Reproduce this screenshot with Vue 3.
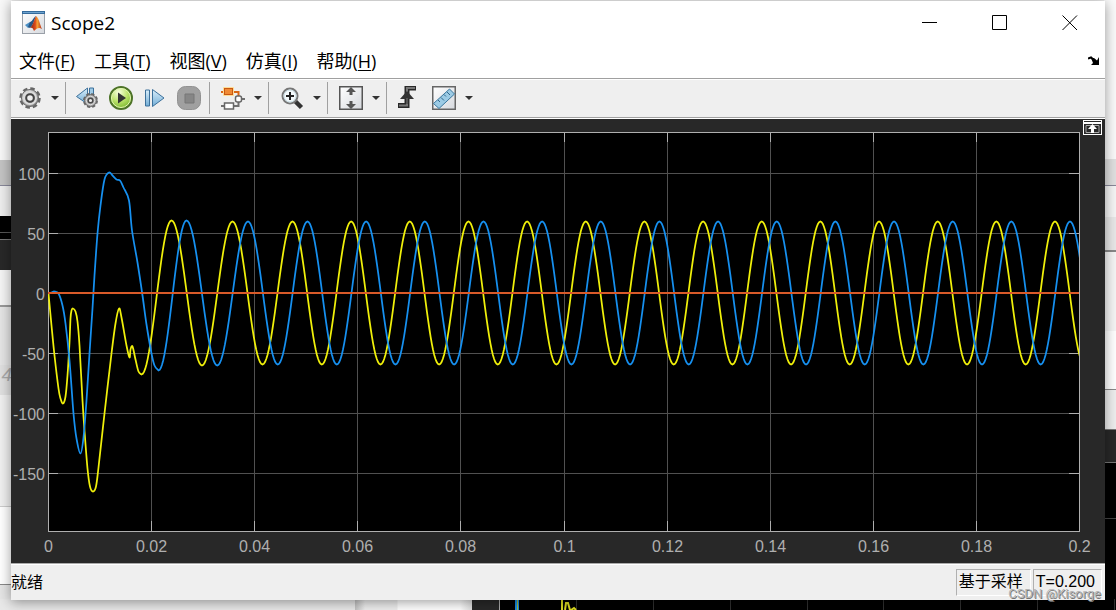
<script setup>
const menus = [
  { text: '文件', key: 'F' },
  { text: '工具', key: 'T' },
  { text: '视图', key: 'V' },
  { text: '仿真', key: 'I' },
  { text: '帮助', key: 'H' },
]

const left = 37
const right = 1068
const top = 13
const bottom = 412
const xTicks = ['0', '0.02', '0.04', '0.06', '0.08', '0.1', '0.12', '0.14', '0.16', '0.18', '0.2'].map((label, i) => ({
  label,
  x: Math.round(left + (i * (right - left)) / 10) + 0.5,
}))
const yTicks = [100, 50, 0, -50, -100, -150].map((v, i) => ({ label: String(v), y: [54, 114, 174, 234, 294, 354][i] + 0.5 }))
const xInner = xTicks.slice(1, -1)

// Start-up transients, in window coordinates of the trace
const yellowStart = [
  [48, 293], [51, 325], [54, 355], [58, 388], [60, 398], [62.5, 403], [65, 396], [67, 375], [69, 342], [70, 318], [71, 310],
  [72.5, 308], [75, 311], [77, 321], [79, 345], [82, 400], [84, 430], [87, 468], [89.5, 486], [92.5, 491], [95.5, 486], [98, 467],
  [104, 413], [111, 353], [115, 323], [118.5, 308], [121, 317], [126, 345], [129, 357], [130, 349], [132, 346], [135, 359],
  [138, 371], [141, 374],
]
const blueStart = [
  [48, 293], [51, 292], [54, 291], [58, 293], [62, 305], [65, 323], [69, 360], [73, 413], [76, 438], [80, 453], [83, 437],
  [86, 400], [89, 353], [92, 308], [94, 275], [97, 233], [100, 205], [104, 179], [108.5, 172], [112, 175], [116, 179],
  [119.5, 180], [123, 187], [128.5, 200], [131.5, 230], [137, 262], [142, 295], [146, 324], [151, 353], [154, 365], [158, 370],
]

function spline(pts) {
  let d = `M${pts[0][0]} ${pts[0][1]}`
  for (let i = 0; i < pts.length - 1; i++) {
    const p0 = pts[Math.max(i - 1, 0)]
    const p1 = pts[i]
    const p2 = pts[i + 1]
    const p3 = pts[Math.min(i + 2, pts.length - 1)]
    d += `C${p1[0] + (p2[0] - p0[0]) / 6} ${p1[1] + (p2[1] - p0[1]) / 6} ${p2[0] - (p3[0] - p1[0]) / 6} ${p2[1] - (p3[1] - p1[1]) / 6} ${p2[0]} ${p2[1]}`
  }
  return d
}

function trace(start, peaks, lastPeak) {
  const ext = [start[start.length - 1]]
  const period = 58.7
  const all = [...peaks]
  const n = Math.round((lastPeak - peaks[peaks.length - 1]) / period)
  const base = peaks[peaks.length - 1]
  for (let i = 1; i <= n + 1; i++) all.push(base + (i * (lastPeak - base)) / n)
  all.forEach((p, i) => {
    ext.push([p, i ? 221 : 220])
    if (i < all.length - 1) ext.push([(p + all[i + 1]) / 2, i ? 364 : 365])
  })
  let d = spline(start)
  for (let i = 0; i < ext.length - 1; i++) {
    const [x0, y0] = ext[i]
    const [x1, y1] = ext[i + 1]
    for (let k = 1; k <= 24; k++) {
      const t = k / 24
      d += `L${(x0 + (x1 - x0) * t).toFixed(2)} ${((y0 + y1) / 2 + ((y0 - y1) / 2) * Math.cos(Math.PI * t)).toFixed(2)}`
    }
  }
  return d
}

const yellow = trace(yellowStart, [171, 232, 292], 1054.5)
const blue = trace(blueStart, [186, 247.5, 307], 1069.5)
</script>

<template>
  <div class="desktop">
    <div class="behind edge-left" aria-hidden="true"><i class="l1"></i><i class="l2"></i><i class="l3"></i><i class="l4"></i><i class="l5"></i><i class="l6"></i><i class="l7"></i><b>4</b><i class="l8"></i><i class="l9"></i><i class="l10"></i></div>
    <div class="behind edge-right" aria-hidden="true"><i class="r1"></i><i class="r2"></i><i class="r3"></i><i class="r4"></i><i class="r5"></i><i class="r6"></i><i class="r7"></i></div>
    <div class="behind edge-bottom" aria-hidden="true">
      <div class="b1"></div><div class="b2"></div><div class="b3"></div>
      <svg class="b4" viewBox="0 0 617 11" preserveAspectRatio="xMinYMin slice">
        <g stroke="#303030"><path d="M76.5 0V11M153.5 0V11M230.5 0V11M307.5 0V11M383.5 0V11M460.5 0V11M537.5 0V11M614.5 0V11" /></g>
        <path d="M17 0V11" stroke="#1689e0" stroke-width="4" /><path d="M17.500 0V11" stroke="#a5b83a" />
        <path d="M62 0V11M65 11L66 4L68 4L70 11M71 11L74 9L76 11" fill="none" stroke="#dddd20" stroke-width="2" />
      </svg>
    </div>

    <main class="window">
      <header class="titlebar">
        <svg class="logo" viewBox="0 0 24 24">
          <defs>
            <linearGradient id="lg" x1="0" x2="1" y1="0" y2="1"><stop offset="0" stop-color="#fff" /><stop offset="1" stop-color="#d6d9de" /></linearGradient>
            <linearGradient id="flame" x1="0" x2="1"><stop offset="0" stop-color="#7c2016" /><stop offset=".45" stop-color="#df4d1c" /><stop offset=".6" stop-color="#f6a435" /><stop offset="1" stop-color="#b62a16" /></linearGradient>
          </defs>
          <rect x=".5" y=".5" width="22" height="22" fill="url(#lg)" stroke="#9aa0a8" />
          <path d="M0 0H23V3H0Z" fill="#356b9c" /><path d="M1 1H22V2H1Z" fill="#6ea3cf" />
          <path d="M3 14L8 11L10 15L6 17Z" fill="#4b8fc4" /><path d="M8 11C10 11 11 7 14 5L11 13L8 17L6 16Z" fill="#285684" />
          <path d="M14 5C17 7 18 14 20 18C17 16 15 17 12 20C11 17 10 16 8 17C11 14 12 9 14 5Z" fill="url(#flame)" />
        </svg>
        <h1>Scope2</h1>
        <div class="controls">
          <button aria-label="最小化"><svg viewBox="0 0 16 16"><path d="M0 7.5H15" /></svg></button>
          <button aria-label="最大化"><svg viewBox="0 0 16 16"><path d="M.5 .5H14.5V14.5H.5Z" /></svg></button>
          <button aria-label="关闭"><svg viewBox="0 0 16 16"><path d="M.5 .5L15 15M15 .5L.5 15" /></svg></button>
        </div>
      </header>

      <nav class="menubar">
        <button v-for="m in menus" :key="m.key">{{ m.text }}(<u>{{ m.key }}</u>)</button>
        <button class="dock" aria-label="停靠"><svg viewBox="0 0 12 10"><path d="M0 2.500L3 1.500L7 5" fill="none" stroke="#000" stroke-width="2" /><path d="M11 1V9H3L5 7L3 2H6L9 4.500Z" /></svg></button>
      </nav>

      <div class="toolbar" role="toolbar">
        <div class="group first">
          <div class="split">
            <button aria-label="配置属性">
              <svg viewBox="0 0 24 24">
                <defs><linearGradient id="metal" x1="0" y1="0" x2="1" y2="1"><stop offset="0" stop-color="#eee" /><stop offset="1" stop-color="#777" /></linearGradient></defs>
                <circle cx="12" cy="12" r="9.5" fill="none" stroke="#666" stroke-width="2.500" stroke-dasharray="4.500 2.960" />
                <circle cx="12" cy="12" r="8.500" fill="url(#metal)" stroke="#666" /><circle cx="12" cy="12" r="6" fill="none" stroke="#dcdcdc" stroke-width="2" />
                <circle cx="12" cy="12" r="3.800" fill="#efefef" stroke="#444" stroke-width="2" />
              </svg>
            </button>
            <button class="drop" aria-label="更多配置"></button>
          </div>
        </div>
        <div class="group run">
          <button aria-label="单步回退">
            <svg viewBox="0 0 24 24">
              <defs><linearGradient id="sky" x1="0" y1="0" x2="0" y2="1"><stop offset="0" stop-color="#d9eefa" /><stop offset="1" stop-color="#72add6" /></linearGradient></defs>
              <path d="M1.500 10.500L12.500 2V18Z" fill="url(#sky)" stroke="#3d719b" /><path d="M14.500 2H18.500V12H14.500Z" fill="#9fcbe7" stroke="#3d719b" />
              <circle cx="15.500" cy="14.500" r="6.500" fill="none" stroke="#666" stroke-width="2" stroke-dasharray="3.200 1.900" />
              <circle cx="15.500" cy="14.500" r="6" fill="#a9a9a9" stroke="#686868" /><circle cx="15.500" cy="14.500" r="4.200" fill="none" stroke="#ddd" /><circle cx="15.500" cy="14.500" r="2.300" fill="#eee" stroke="#4a4a4a" stroke-width="1.500" />
            </svg>
          </button>
          <button aria-label="运行">
            <svg viewBox="0 0 24 24">
              <defs><radialGradient id="go" cx=".4" cy=".25" r=".8"><stop offset="0" stop-color="#f8ffdf" /><stop offset=".5" stop-color="#bce36c" /><stop offset="1" stop-color="#6faf22" /></radialGradient></defs>
              <circle cx="12" cy="12" r="11" fill="url(#go)" stroke="#4d7328" stroke-width="2" /><circle cx="12" cy="12" r="9.500" fill="none" stroke="#e2f6b1" stroke-width="1" />
              <path d="M9 6.500V17.500L17 12Z" fill="#333" />
            </svg>
          </button>
          <button aria-label="步进"><svg viewBox="0 0 24 24"><path d="M2.500 4H6.500V20H2.500Z" fill="url(#sky)" stroke="#3d719b" /><path d="M9.500 3.500V20.500L21 12Z" fill="url(#sky)" stroke="#3d719b" /></svg></button>
          <button aria-label="停止"><svg viewBox="0 0 24 24"><rect x=".5" y=".5" width="23" height="23" rx="8" fill="#a0a0a0" stroke="#929292" /><path d="M8 8H17V17H8Z" fill="#868686" stroke="#777" /></svg></button>
        </div>
        <div class="group">
          <div class="split">
            <button aria-label="突出显示模块">
              <svg viewBox="0 0 24 24">
                <path d="M0 20H3M13 20H17.500V16M21 13H24" fill="none" stroke="#707070" stroke-width="2" /><path d="M0 6H3M13 6H17.500V10" fill="none" stroke="#d96716" stroke-width="2" />
                <rect x="2" y="1" width="11" height="9" rx="1" fill="#ffdb94" /><rect x="3.500" y="2.500" width="8" height="6" fill="#f08a35" stroke="#c85813" />
                <rect x="3.500" y="17" width="9" height="6" fill="#fff" stroke="#666" stroke-width="1.500" /><rect x="14.500" y="10" width="6" height="6" rx="2" fill="#fff" stroke="#666" stroke-width="1.500" />
              </svg>
            </button>
            <button class="drop" aria-label="更多模块"></button>
          </div>
        </div>
        <div class="group">
          <div class="split">
            <button aria-label="放大">
              <svg viewBox="0 0 24 24"><path d="M15 15L21.500 21.500" stroke="#333" stroke-width="4.500" /><circle cx="10" cy="10" r="7.500" fill="#f4fafc" stroke="#777" stroke-width="2" /><circle cx="10" cy="10" r="6" fill="none" stroke="#c9dde4" /><path d="M6 10H14M10 6V14" stroke="#222" stroke-width="2" /></svg>
            </button>
            <button class="drop" aria-label="更多缩放"></button>
          </div>
        </div>
        <div class="group">
          <div class="split">
            <button aria-label="自动缩放">
              <svg viewBox="0 0 24 24"><rect x=".75" y=".75" width="22.500" height="22.500" fill="url(#lg)" stroke="#555" stroke-width="1.500" /><path d="M12 1L17 6H13.500V9H10.500V6H7ZM12 23L17 18H13.500V15H10.500V18H7Z" fill="#555" /></svg>
            </button>
            <button class="drop" aria-label="更多自动缩放"></button>
          </div>
        </div>
        <div class="group last">
          <button aria-label="触发器">
            <svg viewBox="0 0 24 24"><path d="M3 19.500H12V2H21" fill="none" stroke="#292929" stroke-width="5" /><path d="M4 19.500H12V2H20" fill="none" stroke="#777" stroke-width="2" /><path d="M12 5L19 13H5Z" fill="#333" /><path d="M12 12V18" stroke="#555" stroke-width="2" /></svg>
          </button>
          <div class="split">
            <button aria-label="光标测量">
              <svg viewBox="0 0 24 24"><rect x=".75" y=".75" width="22.500" height="22.500" fill="url(#lg)" stroke="#666" stroke-width="1.500" /><path d="M1.500 17.500L17.500 3L22.500 8L7 22.500Z" fill="#9ccbe5" stroke="#3b779d" /><path d="M6 14L8 16M9 11.500L12 14.500M12 8.500L14 10.500M15 6L18 9" stroke="#32688b" /></svg>
            </button>
            <button class="drop" aria-label="更多测量"></button>
          </div>
        </div>
      </div>

      <section class="scope">
        <svg class="plot" viewBox="0 0 1094 444" role="img" aria-label="Scope2">
          <rect :x="left" :y="top" :width="right - left" :height="bottom - top" fill="#000" />
          <g stroke="#505050">
            <line v-for="t in xInner" :key="t.label" :x1="t.x" :x2="t.x" :y1="top" :y2="bottom" />
            <line v-for="t in yTicks" :key="t.label" :x1="left" :x2="right" :y1="t.y" :y2="t.y" />
          </g>
          <g stroke="#afafaf" fill="none">
            <path v-for="t in xInner" :key="t.label" :d="`M${t.x} ${top}v10M${t.x} ${bottom}v-10`" />
            <path v-for="t in yTicks" :key="t.label" :d="`M${left} ${t.y}h10M${right} ${t.y}h-10`" />
            <rect x="37.500" y="13.500" width="1031" height="399" />
          </g>
          <clipPath id="area"><rect x="37" y="13" width="1031" height="399" /></clipPath>
          <g clip-path="url(#area)" fill="none" stroke-width="1.750">
            <g transform="translate(-10.500 -118.500)">
              <path :d="yellow" stroke="#f0f00a" />
              <path :d="blue" stroke="#1690f0" />
            </g>
            <path d="M37 174H1068" stroke="#d95a29" stroke-width="2" />
          </g>
          <g class="labels">
            <text v-for="t in xTicks" :key="t.label" :x="t.x" y="433" text-anchor="middle">{{ t.label }}</text>
            <text v-for="t in yTicks" :key="t.label" x="34" :y="t.y + 6" text-anchor="end">{{ t.label }}</text>
          </g>
          <path d="M1072 1H1091V16H1072Z" fill="#fff" /><path d="M1073 2H1090V3H1073ZM1073 5H1090V15H1073Z" fill="#282828" />
          <path d="M1075 13.500V6.500H1088V13.500H1075Z" fill="none" stroke="#a8a8a8" /><path d="M1081.500 5L1086 10H1083V14H1080V10H1077Z" fill="#fff" />
        </svg>
      </section>

      <footer class="status">
        <span class="ready">就绪</span>
        <span class="cell mode">基于采样</span>
        <span class="cell time">T=0.200</span>
      </footer>
    </main>
    <div class="watermark">CSDN @Kisorge</div>
  </div>
</template>

<style>
body { margin: 0; }
</style>

<style scoped>
.desktop {
  position: relative;
  box-sizing: border-box;
  display: flex;
  min-height: 100vh;
  padding: 1px 11px 10px;
  background: #eee;
  overflow: hidden;
  font-family: "Liberation Sans", "Noto Sans CJK SC", sans-serif;
  color: #000;
}
.window {
  position: relative;
  flex: 1;
  min-width: 0;
  display: flex;
  flex-direction: column;
  background: #efefef;
  box-shadow: 0 2px 12px rgba(0, 0, 0, .4);
}
button {
  padding: 0;
  border: 0;
  background: none;
  font: inherit;
  color: inherit;
}
button svg { display: block; width: 24px; height: 24px; }
.titlebar {
  display: flex;
  align-items: center;
  height: 43px;
  padding-left: 11px;
  background: #fff;
}
.logo { width: 24px; height: 24px; }
h1 {
  margin: 0 0 0 5px;
  font: 400 19px/24px "Open Sans", "Noto Sans", sans-serif;
}
.controls { display: flex; margin-left: auto; }
.controls button {
  display: flex;
  justify-content: center;
  width: 70px;
  padding: 14px 0;
}
.controls svg {
  width: 16px;
  height: 16px;
  fill: none;
  stroke: #000;
}
.menubar {
  display: flex;
  align-items: center;
  gap: 19px;
  height: 34px;
  padding: 0 5px 0 8px;
  background: #fff;
  font: 18px/24px "Open Sans", "Noto Sans CJK SC", sans-serif;
}
.menubar u { text-underline-offset: 2px; text-decoration-thickness: 1px; }
.menubar .dock { margin-left: auto; }
.menubar .dock svg { width: 12px; height: 10px; }
.toolbar {
  display: flex;
  align-items: center;
  height: 38px;
  border-top: 1px solid #a0a0a0;
  border-bottom: 1px solid #a0a0a0;
  box-shadow: inset 0 1px #fff;
}
.group {
  display: flex;
  align-items: center;
  gap: 10px;
  height: 32px;
  padding: 0 3px 0 11px;
  border-right: 1px solid #a0a0a0;
}
.group.first { padding-left: 7px; }
.group.run { padding: 0 8px 0 9px; }
.group.last { gap: 13px; padding-left: 8px; border: 0; }
.split { display: flex; align-items: center; gap: 6px; }
.drop {
  display: flex;
  justify-content: center;
  width: 14px;
  height: 24px;
  align-items: center;
}
.drop::after {
  content: "";
  border: 4px solid transparent;
  border-top-color: #333;
  border-bottom: 0;
}
.scope {
  flex: 1;
  border-top: 1px solid #fff;
  border-bottom: 1px solid #aaa;
  background: #282828;
}
.plot { display: block; width: 100%; }
.labels { font: 16px "Liberation Sans", sans-serif; fill: #afafaf; }
.status {
  display: flex;
  align-items: center;
  gap: 2px;
  height: 36px;
  padding-right: 3px;
  box-sizing: border-box;
  border-top: 1px solid #fff;
  font-size: 16px;
  line-height: 24px;
}
.ready { margin-right: auto; }
.cell {
  padding: 0 7px 1px 2px;
  border: 1px solid;
  border-color: #b0b0b0 #fff #fff #b0b0b0;
}
.time { padding-right: 6px; }
.watermark {
  position: absolute;
  right: 15px;
  bottom: 8px;
  font: 13px/16px Roboto, sans-serif;
  color: #b4b4b4;
  text-shadow: 1px 1px #777;
}
.behind { position: absolute; overflow: hidden; }
.edge-left { left: 0; top: 0; bottom: 0; width: 12px; display: flex; flex-direction: column; }
.edge-right { right: 0; top: 0; bottom: 0; width: 12px; display: flex; flex-direction: column; }
.edge-left i, .edge-right i { flex: none; box-sizing: border-box; }
.l1 { height: 160px; background: #f8f8f8; }
.l2 { height: 26px; background: #c4c4c4; border-bottom: 1px solid #889; }
.l3 { height: 30px; background: #eee; }
.l4 { height: 24px; background: linear-gradient(#000 16px, #555 16px, #555 17px, #000 17px); border-bottom: 1px solid #777; }
.l5 { height: 30px; background: #282828; }
.l6 { height: 37px; background: #f5f5f5; border-bottom: 2px solid #999; }
.l7 { height: 58px; background: #e5e5e5; }
.edge-left b { flex: none; height: 30px; background: #e0e0e0; font: italic 19px/20px "Liberation Sans", sans-serif; color: #aaa; text-align: right; }
.l8 { height: 112px; background: #f0f0f0; border-bottom: 1px solid #ccc; }
.l9 { height: 78px; background: #fff; border-bottom: 1px solid #888; }
.l10 { height: 25px; background: #e5e5e5; }
.r1 { height: 186px; background: linear-gradient(#fafafa 86%, #e0e0e0 86%); border-bottom: 1px solid #889; }
.r2 { height: 31px; background: #f5f5f5; }
.r3 { height: 35px; background: #e8e8e8; border-bottom: 2px solid #888; }
.r4 { height: 138px; background: linear-gradient(#f5f5f5 58%, #fff 58%); border-bottom: 1px solid #888; }
.r5 { height: 40px; background: #eee; border-bottom: 1px solid #777; }
.r6 { height: 33px; background: #282828; border-bottom: 1px solid #777; }
.r7 { height: 147px; background: linear-gradient(#000 55px, #444 55px, #444 56px, #000 56px); }
.edge-bottom { left: 0; right: 0; bottom: 0; height: 11px; display: flex; }
.b1 { width: 355px; background: #e8e8e8; }
.b2 { width: 117px; background: linear-gradient(90deg, #c0c0c0, #eee 10px, #eee 42px, #fff 43px, #fff 105px, #ddd); }
.b3 { width: 27px; background: #282828; }
.b4 { flex: 1; height: 11px; background: #000; border-left: 1px solid #aaa; }
</style>
